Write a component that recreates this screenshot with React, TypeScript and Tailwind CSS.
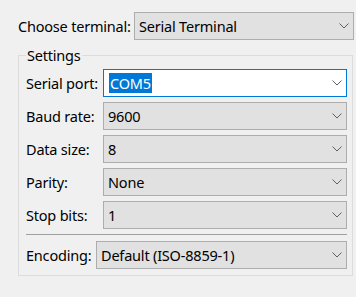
type ComboProps = {
  value: string;
  focused?: boolean;
  className?: string;
};

function Chevron() {
  return (
    <svg width="10" height="6" viewBox="0 0 10 6" className="shrink-0 mr-[4px]">
      <path d="M0.5 0.5 L5 5 L9.5 0.5" fill="none" stroke="#606060" strokeWidth="1" />
    </svg>
  );
}

function Combo({ value, focused, className }: ComboProps) {
  if (focused) {
    return (
      <div className={`flex items-center h-[28px] border border-[#0078d7] bg-white ${className ?? ''}`}>
        <div className="flex-1 pl-[5px]">
          <span className="bg-[#0078d7] text-white px-px">{value}</span>
        </div>
        <Chevron />
      </div>
    );
  }
  return (
    <div className={`flex items-center h-[28px] border border-[#adadad] bg-[#e1e1e1] ${className ?? ''}`}>
      <div className="flex-1 pl-[4px] whitespace-nowrap">{value}</div>
      <Chevron />
    </div>
  );
}

const rows = [
  { label: 'Serial port:', value: 'COM5', focused: true },
  { label: 'Baud rate:', value: '9600' },
  { label: 'Data size:', value: '8' },
  { label: 'Parity:', value: 'None' },
  { label: 'Stop bits:', value: '1' },
];

export default function App() {
  return (
    <div
      className="w-[356px] h-[297px] bg-[#f0f0f0] text-black text-[14.5px] leading-[20px] tracking-[-0.2px] overflow-hidden"
      style={{ fontFamily: '"Noto Sans", "Open Sans", sans-serif' }}
    >
      {/* Terminal chooser */}
      <div className="flex items-center pt-[12px] pl-[18px]">
        <span className="w-[116px] whitespace-nowrap">Choose terminal:</span>
        <Combo value="Serial Terminal" className="w-[220px]" />
      </div>

      {/* Settings group */}
      <fieldset className="mt-[5px] ml-[18px] w-[335px] border border-[#dcdcdc] pl-[7px] pr-[5px] pt-[4px] pb-[6px]">
        <legend className="px-px leading-[20px]">Settings</legend>
        <div className="flex flex-col gap-[5px]">
          {rows.map((r) => (
            <div key={r.label} className="flex items-center">
              <span className="w-[77px] whitespace-nowrap">{r.label}</span>
              <Combo value={r.value} focused={r.focused} className="flex-1" />
            </div>
          ))}
          <div className="h-px bg-[#a0a0a0]" />
          <div className="flex items-center mt-px">
            <span className="w-[70px] whitespace-nowrap">Encoding:</span>
            <Combo value="Default (ISO-8859-1)" className="flex-1" />
          </div>
        </div>
      </fieldset>
    </div>
  );
}
